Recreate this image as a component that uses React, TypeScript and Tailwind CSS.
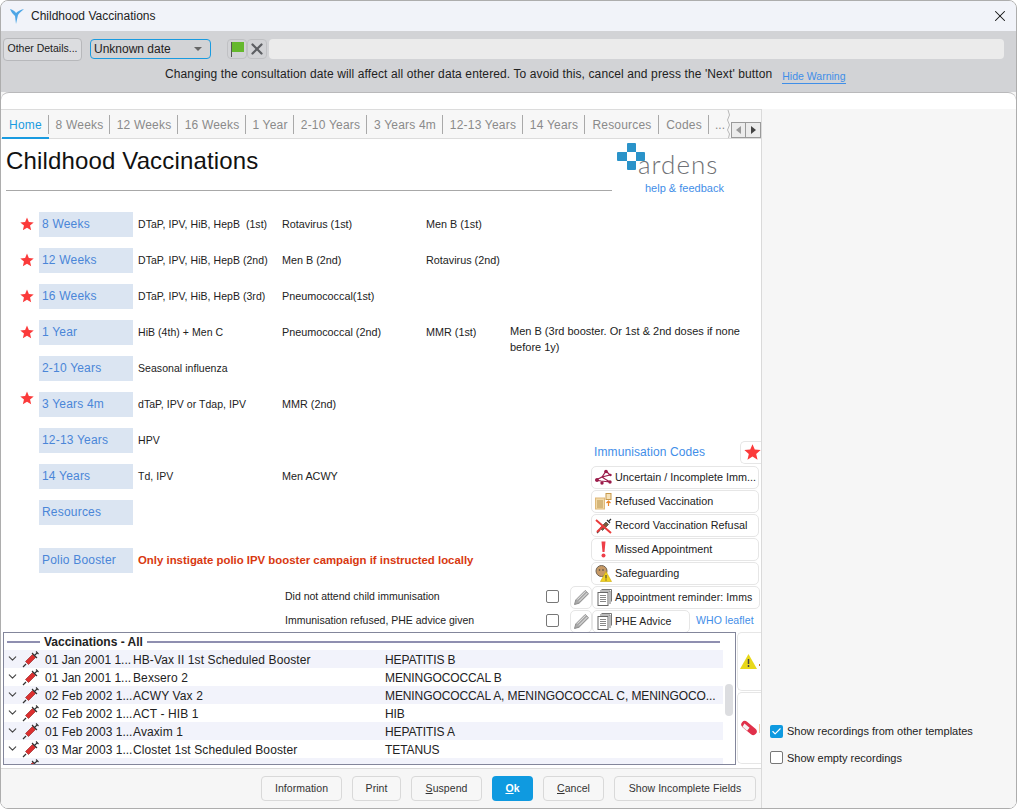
import { X, ChevronDown, Check } from "lucide-react";

const FONT = "font-['Liberation_Sans',Arial,sans-serif]";

const tabs = [
  { name: "Home", w: "w-[47px]" },
  { name: "8 Weeks", w: "w-[61px]" },
  { name: "12 Weeks", w: "w-[68px]" },
  { name: "16 Weeks", w: "w-[68px]" },
  { name: "1 Year", w: "w-[48px]" },
  { name: "2-10 Years", w: "w-[73px]" },
  { name: "3 Years 4m", w: "w-[76px]" },
  { name: "12-13 Years", w: "w-[80px]" },
  { name: "14 Years", w: "w-[62px]" },
  { name: "Resources", w: "w-[74px]" },
  { name: "Codes", w: "w-[50px]" },
];

const vaccines = [
  { date: "01 Jan 2001 1...", name: "HB-Vax II 1st Scheduled Booster", against: "HEPATITIS B" },
  { date: "01 Jan 2001 1...", name: "Bexsero 2", against: "MENINGOCOCCAL B" },
  { date: "02 Feb 2002 1...", name: "ACWY Vax 2", against: "MENINGOCOCCAL A, MENINGOCOCCAL C, MENINGOCO..." },
  { date: "02 Feb 2002 1...", name: "ACT - HIB 1", against: "HIB" },
  { date: "01 Feb 2003 1...", name: "Avaxim 1", against: "HEPATITIS A" },
  { date: "03 Mar 2003 1...", name: "Clostet 1st Scheduled Booster", against: "TETANUS" },
  { date: "", name: "", against: "" },
];

function Star({ size = 14 }: { size?: number }) {
  return (
    <svg width={size} height={size} viewBox="0 0 24 24">
      <path d="M12 1l3.2 7.6 8.3.7-6.3 5.4 1.9 8.1L12 18.5l-7.1 4.3 1.9-8.1L.5 9.3l8.3-.7z" fill="#fb3a3a" />
    </svg>
  );
}

function Syringe() {
  return (
    <svg width="18" height="18" viewBox="0 0 18 18" className="-mt-[2px] shrink-0">
      <path d="M1 17l3-3" stroke="#333" strokeWidth="1.2" />
      <path d="M3.5 11.5l7-7 3 3-7 7z" fill="#dc2f2f" stroke="#8a1c1c" strokeWidth="0.6" />
      <path d="M10 3l5 5M12.5 5.5l2.5-2.5M14 1.5l2.5 2.5" stroke="#333" strokeWidth="1.1" fill="none" />
    </svg>
  );
}

function DocIcon() {
  return (
    <svg width="15" height="17" viewBox="0 0 15 17">
      <path d="M4.5.5h10v12" fill="none" stroke="#777" />
      <path d="M3 2h10v13" fill="none" stroke="#777" />
      <rect x="1" y="3.5" width="10" height="13" fill="#fff" stroke="#666" />
      <path d="M3 6.5h6M3 8.5h6M3 10.5h6M3 12.5h6" stroke="#888" />
    </svg>
  );
}

function CodeIcon({ kind }: { kind: string }) {
  if (kind === "network") {
    return (
      <svg width="17" height="17" viewBox="0 0 17 17">
        <path d="M11 2L7 8 1 11l5 1 9 1-5-3-3-2 8-2z" fill="none" stroke="#9b1b4a" strokeWidth="1.2" />
        <circle cx="11" cy="2.5" r="1.8" fill="#9b1b4a" />
        <circle cx="2" cy="11" r="1.9" fill="#9b1b4a" />
        <circle cx="15" cy="13" r="1.7" fill="#9b1b4a" />
        <circle cx="7" cy="14" r="1.7" fill="#9b1b4a" />
        <circle cx="15.5" cy="6" r="1.2" fill="#9b1b4a" />
      </svg>
    );
  }
  if (kind === "refused") {
    return (
      <svg width="17" height="17" viewBox="0 0 17 17">
        <rect x="0.5" y="5" width="9" height="11" fill="#f2d9a6" stroke="#dfb878" />
        <path d="M2 8h6M2 10h6M2 12h6M2 14h6" stroke="#b8934e" />
        <rect x="11" y="0.5" width="5" height="6" fill="#f6e2ba" stroke="#c79a4c" />
        <path d="M13.5 8v5M11.5 10l2-2 2 2" stroke="#e8862a" strokeWidth="1.2" fill="none" />
      </svg>
    );
  }
  if (kind === "refusal") {
    return (
      <svg width="18" height="18" viewBox="0 0 18 18">
        <path d="M5 11l6-6 2.5 2.5-6 6z" fill="#7b5a3a" stroke="#444" strokeWidth="0.7" />
        <path d="M2 16l3-3M12 3l3 3M14 4l2-2" stroke="#333" strokeWidth="1.2" />
        <path d="M1 3l15 13M2 15L8 9" stroke="#ea3b3b" strokeWidth="2" />
      </svg>
    );
  }
  if (kind === "missed") {
    return (
      <svg width="17" height="17" viewBox="0 0 17 17">
        <path d="M6.5 0.5h4L9.5 11h-2z" fill="#ee3e48" />
        <circle cx="8.5" cy="14.5" r="2" fill="#ee3e48" />
      </svg>
    );
  }
  return (
    <svg width="17" height="17" viewBox="0 0 17 17">
      <circle cx="6.5" cy="6" r="5.5" fill="#c79a66" stroke="#6f6355" />
      <circle cx="4.5" cy="5" r="0.8" fill="#444" />
      <circle cx="8" cy="5" r="0.8" fill="#444" />
      <path d="M11 6.5l5.5 10h-11z" fill="#f2d21f" stroke="#c9a90c" strokeWidth="0.6" />
      <path d="M11 10v3.5M11 14.5v1" stroke="#333" />
    </svg>
  );
}

function VaccRow({
  label,
  star,
  starHigh,
  cols,
}: {
  label: string;
  star?: boolean;
  starHigh?: boolean;
  cols: string[];
}) {
  return (
    <div className="flex h-[25px] items-center">
      <div className={`flex w-[38px] justify-end pr-[5px] ${starHigh ? "-mt-[13px]" : "pb-[2px]"}`}>
        {star && <Star />}
      </div>
      <div className="flex h-[25px] w-[94px] shrink-0 items-center bg-[#dbe5f2] pb-[2px] pl-[3px] text-[12px] tracking-[0.2px] text-[#4a86d8]">
        {label}
      </div>
      <div className="w-[149px] shrink-0 whitespace-pre pl-[5px] text-[10.5px] tracking-[0.05px] text-[#222]">{cols[0]}</div>
      <div className="w-[144px] shrink-0 text-[10.8px] text-[#222]">{cols[1]}</div>
      <div className="w-[84px] shrink-0 text-[10.8px] text-[#222]">{cols[2]}</div>
    </div>
  );
}

function CodeButton({ icon, label }: { icon: string; label: string }) {
  return (
    <div className="flex h-[23px] w-[168px] items-center overflow-hidden rounded-[5px] border border-[#e6e6e6] bg-white">
      <div className="flex w-[23px] shrink-0 justify-center">
        <CodeIcon kind={icon} />
      </div>
      <span className="whitespace-nowrap text-[10.8px] text-[#222]">{label}</span>
    </div>
  );
}

function Pencil() {
  return (
    <div className="flex h-[23px] w-[22px] shrink-0 items-center justify-center rounded-[5px] border border-[#e6e6e6] bg-white">
      <svg width="17" height="17" viewBox="0 0 17 17">
        <path d="M1.5 15.5l1.3-4.6L12.2 1.5l3.3 3.3-9.4 9.4z" fill="#a9a9a9" stroke="#8d8d8d" />
        <path d="M4.2 10.6l8.4-8.4M6 12.4l8.4-8.4" stroke="#eeeeee" strokeWidth="0.9" />
      </svg>
    </div>
  );
}

function FootButton({ children, w, primary }: { children: React.ReactNode; w: string; primary?: boolean }) {
  return (
    <button
      className={`flex h-[25px] ${w} items-center justify-center rounded-[4px] text-[10.5px] tracking-[0.05px] ${
        primary ? "bg-[#0f9ae0] font-bold text-white" : "border border-[#d9d9d9] bg-[#f7f7f7] text-[#333]"
      }`}
    >
      {children}
    </button>
  );
}

export default function App() {
  return (
    <div className={`${FONT} flex h-[809px] w-[1017px] flex-col overflow-hidden rounded-lg border border-[#adadad] bg-[#f6f6f6]`}>
      {/* title bar */}
      <div className="flex h-[30px] shrink-0 items-center bg-[#f1f3f9] pl-[8px] pr-[7px]">
        <svg width="16" height="17" viewBox="0 0 16 17">
          <path d="M1 1c3 1 5 2 6 4 2-2 4-3 8-4-2 2-5 4-6 6L7 16 6 8C4 6 2 4 1 1z" fill="#4ea6e6" />
        </svg>
        <span className="ml-[6px] text-[12px] text-[#222]">Childhood Vaccinations</span>
        <X size={18} strokeWidth={1.4} className="ml-auto text-[#111]" />
      </div>

      {/* date toolbar */}
      <div className="h-[61px] shrink-0 bg-[#d2d3d6]">
        <div className="flex h-[32px] items-center pl-[2px] pt-[4px]">
          <button className="h-[23px] w-[79px] rounded-[4px] border border-[#b7b8bb] bg-[#dcdde0] text-[10.5px] text-[#222]">
            Other Details...
          </button>
          <div className="ml-[8px] flex h-[20px] w-[121px] items-center justify-between rounded-[4px] border border-[#1a9be0] pl-[3px] pr-[5px] text-[12px] text-[#222]">
            Unknown date
            <span className="mr-[3px] h-0 w-0 border-x-[4px] border-t-[4px] border-x-transparent border-t-[#666]" />
          </div>
          <div className="ml-[16px] flex h-[20px] w-[20px] items-center justify-center rounded-[4px] border border-[#c0c1c4]">
            <svg width="15" height="16" viewBox="0 0 15 16">
              <path d="M1.5 1v15" stroke="#555" />
              <path d="M2 1h12v10H2z" fill="#65b82d" />
            </svg>
          </div>
          <div className="flex h-[20px] w-[20px] items-center justify-center rounded-[4px] border border-[#c0c1c4]">
            <X size={18} strokeWidth={3} className="text-[#5d5f63]" />
          </div>
          <div className="ml-[2px] h-[20px] w-[735px] rounded-[4px] bg-[#ebebeb]" />
        </div>
        <div className="flex h-[22px] items-center pl-[164px]">
          <span className="text-[12px] tracking-[0.11px] text-[#222]">
            Changing the consultation date will affect all other data entered. To avoid this, cancel and press the 'Next' button
          </span>
          <span className="ml-[10px] mt-[5px] border-b border-[#3f8ee8] text-[10.5px] leading-[13px] text-[#3f8ee8]">Hide Warning</span>
        </div>
      </div>

      {/* white sheet */}
      <div className="flex min-h-0 flex-1 flex-col overflow-hidden rounded-t-[8px] border-t border-[#b9b9bb] bg-white">
        <div className="h-[16px] shrink-0" />
        <div className="flex min-h-0 flex-1">
          {/* left column */}
          <div className="flex w-[761px] shrink-0 flex-col border-r border-[#dadada]">
            <div className="flex h-[30px] shrink-0 items-center border-y border-[#dcdcdc] bg-[#f7f7f7] pl-[1px]">
              {tabs.map((t, i) => (
                <div
                  key={t.name}
                  className={`relative flex h-[28px] ${t.w} shrink-0 items-center justify-center pt-[2px] text-[12px] tracking-[0.2px] ${
                    i === 0 ? "text-[#1a9be0]" : "text-[#8a8a8a]"
                  }`}
                >
                  {t.name}
                  <span className="absolute right-0 top-[5px] h-[19px] w-px bg-[#a9a9a9]" />
                  {i === 0 && <span className="absolute inset-x-0 bottom-[-1px] h-[2px] bg-[#1a9be0]" />}
                </div>
              ))}
              <span className="ml-[6px] pt-[2px] text-[12px] text-[#8a8a8a]">...</span>
              <svg width="5" height="28" viewBox="0 0 5 28" className="ml-px shrink-0">
                <path d="M2 0l1.5 5L1.5 10l2 5-2 5 2 4-1 4" fill="none" stroke="#b8b8b8" />
              </svg>
              <div className="mt-[12px] flex h-[16px]">
                <div className="flex w-[15px] items-center justify-center border border-[#9a9a9a] bg-[#ececec]">
                  <span className="h-0 w-0 border-y-[4px] border-r-[5px] border-y-transparent border-r-[#999]" />
                </div>
                <div className="flex w-[15px] items-center justify-center border border-l-0 border-[#9a9a9a] bg-[#ececec]">
                  <span className="h-0 w-0 border-y-[4px] border-l-[5px] border-y-transparent border-l-[#444]" />
                </div>
              </div>
            </div>

            {/* form area */}
            <div className="h-[493px] shrink-0 overflow-hidden">
              <div className="flex h-[73px]">
                <div className="w-[611px] pl-[5px]">
                  <h1 className="border-b border-[#a8a8a8] pb-[15px] pt-[8px] text-[24px] leading-[28px] tracking-[0.15px] text-[#111]">
                    Childhood Vaccinations
                  </h1>
                </div>
                <div className="flex-1 pl-[5px] pt-[4px]">
                  <div className="relative h-[30px] w-[110px]">
                    <svg width="28" height="28" viewBox="0 0 28 28" className="absolute left-0 top-0">
                      <path d="M11 0h7a1 1 0 011 1v8h-9V1a1 1 0 011-1zM1 9h9v9H1a1 1 0 01-1-1v-7a1 1 0 011-1zM19 9h8a1 1 0 011 1v7a1 1 0 01-1 1h-8zM10 18h9v8a1 1 0 01-1 1h-7a1 1 0 01-1-1z" fill="#2a93c9" />
                    </svg>
                    <span className="absolute left-[21px] top-[8px] font-['Lato',sans-serif] text-[26px] font-light leading-[26px] tracking-[1px] text-[#6f7074]">
                      ardens
                    </span>
                  </div>
                  <div className="mt-[7px] pl-[28px] text-[11px] text-[#3f8ee8]">help &amp; feedback</div>
                </div>
              </div>

              <div className="flex flex-col gap-[11px]">
                <VaccRow label="8 Weeks" star cols={["DTaP, IPV, HiB, HepB  (1st)", "Rotavirus (1st)", "Men B (1st)"]} />
                <VaccRow label="12 Weeks" star cols={["DTaP, IPV, HiB, HepB (2nd)", "Men B (2nd)", "Rotavirus (2nd)"]} />
                <VaccRow label="16 Weeks" star cols={["DTaP, IPV, HiB, HepB (3rd)", "Pneumococcal(1st)", ""]} />
                <div className="flex h-[25px] items-start">
                  <VaccRow label="1 Year" star cols={["HiB (4th) + Men C", "Pneumococcal (2nd)", "MMR (1st)"]} />
                  <div className="w-[240px] pt-[3px] text-[11px] leading-[16px] text-[#222]">
                    Men B (3rd booster. Or 1st &amp; 2nd doses if none before 1y)
                  </div>
                </div>
              </div>

              <div className="mt-[11px] flex">
                <div className="flex w-[569px] shrink-0 flex-col gap-[11px]">
                  <VaccRow label="2-10 Years" cols={["Seasonal influenza", "", ""]} />
                  <VaccRow label="3 Years 4m" star starHigh cols={["dTaP, IPV or Tdap, IPV", "MMR (2nd)", ""]} />
                  <VaccRow label="12-13 Years" cols={["HPV", "", ""]} />
                  <VaccRow label="14 Years" cols={["Td, IPV", "Men ACWY", ""]} />
                  <VaccRow label="Resources" cols={["", "", ""]} />
                  <div className="mt-[12px] flex h-[25px] items-center">
                    <div className="w-[38px]" />
                    <div className="flex h-[25px] w-[94px] items-center bg-[#dbe5f2] pb-[2px] pl-[3px] text-[12px] tracking-[0.2px] text-[#4a86d8]">
                      Polio Booster
                    </div>
                    <div className="pl-[5px] text-[11.4px] font-bold text-[#d8380f]">
                      Only instigate polio IPV booster campaign if instructed locally
                    </div>
                  </div>
                  <div className="mt-[1px] flex h-[24px] items-center justify-between pb-[1px] pl-[284px] pr-[11px] text-[10.5px] text-[#222]">
                    Did not attend child immunisation
                    <span className="h-[13px] w-[13px] rounded-[2px] border border-[#777] bg-white" />
                  </div>
                  <div className="-mt-[11px] flex h-[24px] items-center justify-between pb-[1px] pl-[284px] pr-[11px] text-[10.5px] text-[#222]">
                    Immunisation refused, PHE advice given
                    <span className="h-[13px] w-[13px] rounded-[2px] border border-[#777] bg-white" />
                  </div>
                </div>

                <div className="flex min-w-0 flex-1 flex-col justify-end">
                  <div className="mb-[2px] flex h-[24px] items-center justify-between pl-[24px]">
                    <span className="text-[12px] tracking-[0.1px] text-[#3f8ee8]">Immunisation Codes</span>
                    <div className="flex h-[23px] w-[21px] items-center justify-center rounded-l-[5px] border border-r-0 border-[#e6e6e6] pl-[3px]">
                      <Star size={18} />
                    </div>
                  </div>
                  <div className="flex flex-col gap-px pl-[21px]">
                    <CodeButton icon="network" label="Uncertain / Incomplete Imm..." />
                    <CodeButton icon="refused" label="Refused Vaccination" />
                    <CodeButton icon="refusal" label="Record Vaccination Refusal" />
                    <CodeButton icon="missed" label="Missed Appointment" />
                    <CodeButton icon="safe" label="Safeguarding" />
                  </div>
                  <div className="mt-px flex">
                    <Pencil />
                    <div className="flex h-[23px] w-[168px] items-center rounded-[5px] border border-[#e6e6e6] bg-white">
                      <div className="flex w-[22px] shrink-0 justify-center"><DocIcon /></div>
                      <span className="whitespace-nowrap text-[10.5px] tracking-[0.1px] text-[#222]">Appointment reminder: Imms</span>
                    </div>
                  </div>
                  <div className="mt-px flex items-center">
                    <Pencil />
                    <div className="flex h-[23px] w-[98px] items-center rounded-[5px] border border-[#e6e6e6] bg-white">
                      <div className="flex w-[22px] shrink-0 justify-center"><DocIcon /></div>
                      <span className="text-[10.5px] tracking-[0.1px] text-[#222]">PHE Advice</span>
                    </div>
                    <span className="ml-[6px] pb-[2px] text-[10.5px] tracking-[0.1px] text-[#3f8ee8]">WHO leaflet</span>
                  </div>
                </div>
              </div>
            </div>

            {/* vaccinations list */}
            <div className="flex h-[133px] shrink-0 pl-[2px]">
              <div className="relative h-[133px] w-[733px] overflow-hidden border border-[#83869b] bg-white">
                <div className="flex h-[17px] items-center pl-[3px] pr-[15px]">
                  <span className="h-[2px] w-[33px] bg-[#8f8fb0]" />
                  <span className="px-[4px] text-[12px] font-bold text-[#222]">Vaccinations - All</span>
                  <span className="h-[2px] flex-1 bg-[#8f8fb0]" />
                </div>
                {vaccines.map((v, i) => (
                  <div
                    key={i}
                    className={`flex h-[18px] w-[719px] items-center pt-[1px] text-[12px] text-[#222] ${i % 2 === 0 ? "bg-[#f2f3fb]" : "bg-white"}`}
                  >
                    <ChevronDown size={13} strokeWidth={2} className="ml-[2px] -mt-[2px] w-[13px] shrink-0 text-[#444]" />
                    <div className="ml-[3px] w-[23px] shrink-0"><Syringe /></div>
                    <span className="w-[88px] shrink-0 whitespace-nowrap">{v.date}</span>
                    <span className="w-[252px] shrink-0 whitespace-nowrap tracking-[0.1px]">{v.name}</span>
                    <span className="whitespace-nowrap tracking-[-0.1px]">{v.against}</span>
                  </div>
                ))}
                <div className="absolute right-[2px] top-[51px] h-[32px] w-[8px] rounded-[4px] bg-[#dcdde0]" />
              </div>
              <div className="flex flex-1 flex-col gap-px overflow-hidden pl-[1px]">
                <div className="flex h-[59px] items-center gap-[2px] rounded-l-[5px] border border-r-0 border-[#e6e6e6] pl-[2px]">
                  <svg width="17" height="15" viewBox="0 0 17 15">
                    <path d="M8.5 0L17 15H0z" fill="#e8d81a" />
                    <path d="M8.5 5v5M8.5 11v2" stroke="#444" strokeWidth="1.5" />
                  </svg>
                  <span className="mt-[6px] h-[2px] w-[1px] bg-[#c8782a]" />
                </div>
                <div className="flex h-[72px] items-center gap-[2px] rounded-l-[5px] border border-r-0 border-[#e6e6e6] pl-[3px]">
                  <svg width="16" height="16" viewBox="0 0 16 16">
                    <rect x="-1" y="4.5" width="18" height="7" rx="3.5" transform="rotate(40 8 8)" fill="#e0304a" />
                    <path d="M3.5 3.5l5 4.2-2.4 3-4.6-4z" fill="#f3f3f3" />
                  </svg>
                  <span className="h-[9px] w-[1px] bg-[#f3c9a0]" />
                </div>
              </div>
            </div>

            {/* footer buttons */}
            <div className="mt-[3px] flex flex-1 items-start gap-[10px] border-t border-[#dadada] bg-[#f6f6f6] pl-[260px] pt-[7px]">
              <FootButton w="w-[81px]">Information</FootButton>
              <FootButton w="w-[49px]">Print</FootButton>
              <FootButton w="w-[71px]"><span><u>S</u>uspend</span></FootButton>
              <FootButton w="w-[41px]" primary><span><u>O</u>k</span></FootButton>
              <FootButton w="w-[61px]"><span><u>C</u>ancel</span></FootButton>
              <FootButton w="w-[142px]">Show Incomplete Fields</FootButton>
            </div>
          </div>

          {/* right panel */}
          <div className="flex flex-1 flex-col justify-end bg-[#f6f6f6] pb-[42px] pl-[8px] text-[11px] text-[#222]">
            <div className="flex items-center gap-[4px]">
              <span className="flex h-[13px] w-[13px] items-center justify-center rounded-[2px] bg-[#0f9ae0]">
                <Check size={11} strokeWidth={2.5} className="text-white" />
              </span>
              Show recordings from other templates
            </div>
            <div className="mt-[10px] flex items-center gap-[4px]">
              <span className="h-[13px] w-[13px] rounded-[2px] border border-[#777] bg-white" />
              Show empty recordings
            </div>
          </div>
        </div>
      </div>
    </div>
  );
}
